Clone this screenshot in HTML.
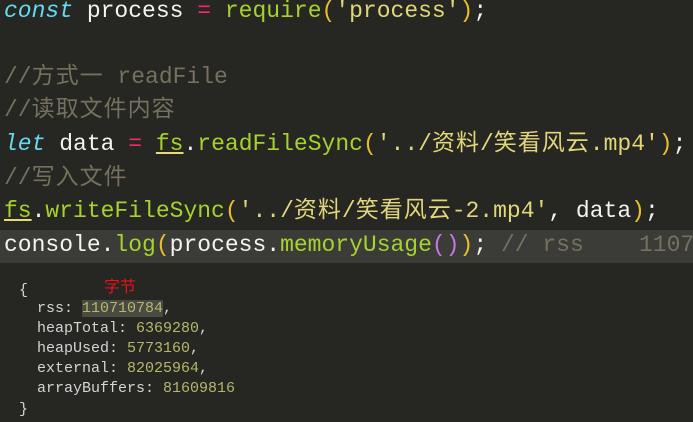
<!DOCTYPE html>
<html><head><meta charset="utf-8"><style>
body{margin:0;width:693px;height:422px;overflow:hidden;background:#262622;font-family:"Liberation Mono","Noto Sans CJK SC",monospace;position:relative}
.l{position:absolute;left:4px;width:689px;overflow:hidden;font-size:23px;white-space:pre;color:#f4f4ee;line-height:33px}
.k{color:#66d9ef;font-style:italic}.o{color:#f92672}.f{color:#a6d22e}.s{color:#e2d67a}.c{color:#75715e}.p{color:#e6c02a}.m{color:#c678dd}
.u{text-decoration:underline;text-decoration-color:#e6db74}
.cj{letter-spacing:1px}
.hl{position:absolute;left:0;top:230px;width:693px;height:33px;background:#3b3b38}
.t{position:absolute;left:19px;font-size:15px;white-space:pre;color:#d4d4d4;line-height:20px}
.n{color:#b5b86b}
</style></head><body>
<div class="hl"></div>
<div class="l" style="top:-5px"><span class="k">const</span> process <span class="o">=</span> <span class="f">require</span><span class="p">(</span><span class="s">'process'</span><span class="p">)</span>;</div>
<div class="l c" style="top:61px">//<span class="cj">方式一</span> readFile</div>
<div class="l c" style="top:94px">//<span class="cj">读取文件内容</span></div>
<div class="l" style="top:128px"><span class="k">let</span> data <span class="o">=</span> <span class="f u">fs</span>.<span class="f">readFileSync</span><span class="p">(</span><span class="s">'../<span class="cj">资料</span>/<span class="cj">笑看风云</span>.mp4'</span><span class="p">)</span>;</div>
<div class="l c" style="top:162px">//<span class="cj">写入文件</span></div>
<div class="l" style="top:195px"><span class="f u">fs</span>.<span class="f">writeFileSync</span><span class="p">(</span><span class="s">'../<span class="cj">资料</span>/<span class="cj">笑看风云</span>-2.mp4'</span>, data<span class="p">)</span>;</div>
<div class="l" style="top:229px">console.<span class="f">log</span><span class="p">(</span>process.<span class="f">memoryUsage</span><span class="m">()</span><span class="p">)</span>; <span class="c">// rss    110710784</span></div>
<div style="position:absolute;left:104px;top:273px;color:#e8131a;font-size:16px;font-family:'Noto Sans CJK SC',sans-serif">字节</div>
<div class="t" style="top:281px">{</div>
<div class="t" style="top:299px">  rss: <span class="n" style="background:#4a4a42">110710784</span>,</div>
<div class="t" style="top:319px">  heapTotal: <span class="n">6369280</span>,</div>
<div class="t" style="top:339px">  heapUsed: <span class="n">5773160</span>,</div>
<div class="t" style="top:359px">  external: <span class="n">82025964</span>,</div>
<div class="t" style="top:379px">  arrayBuffers: <span class="n">81609816</span></div>
<div class="t" style="top:400px">}</div>
</body></html>
